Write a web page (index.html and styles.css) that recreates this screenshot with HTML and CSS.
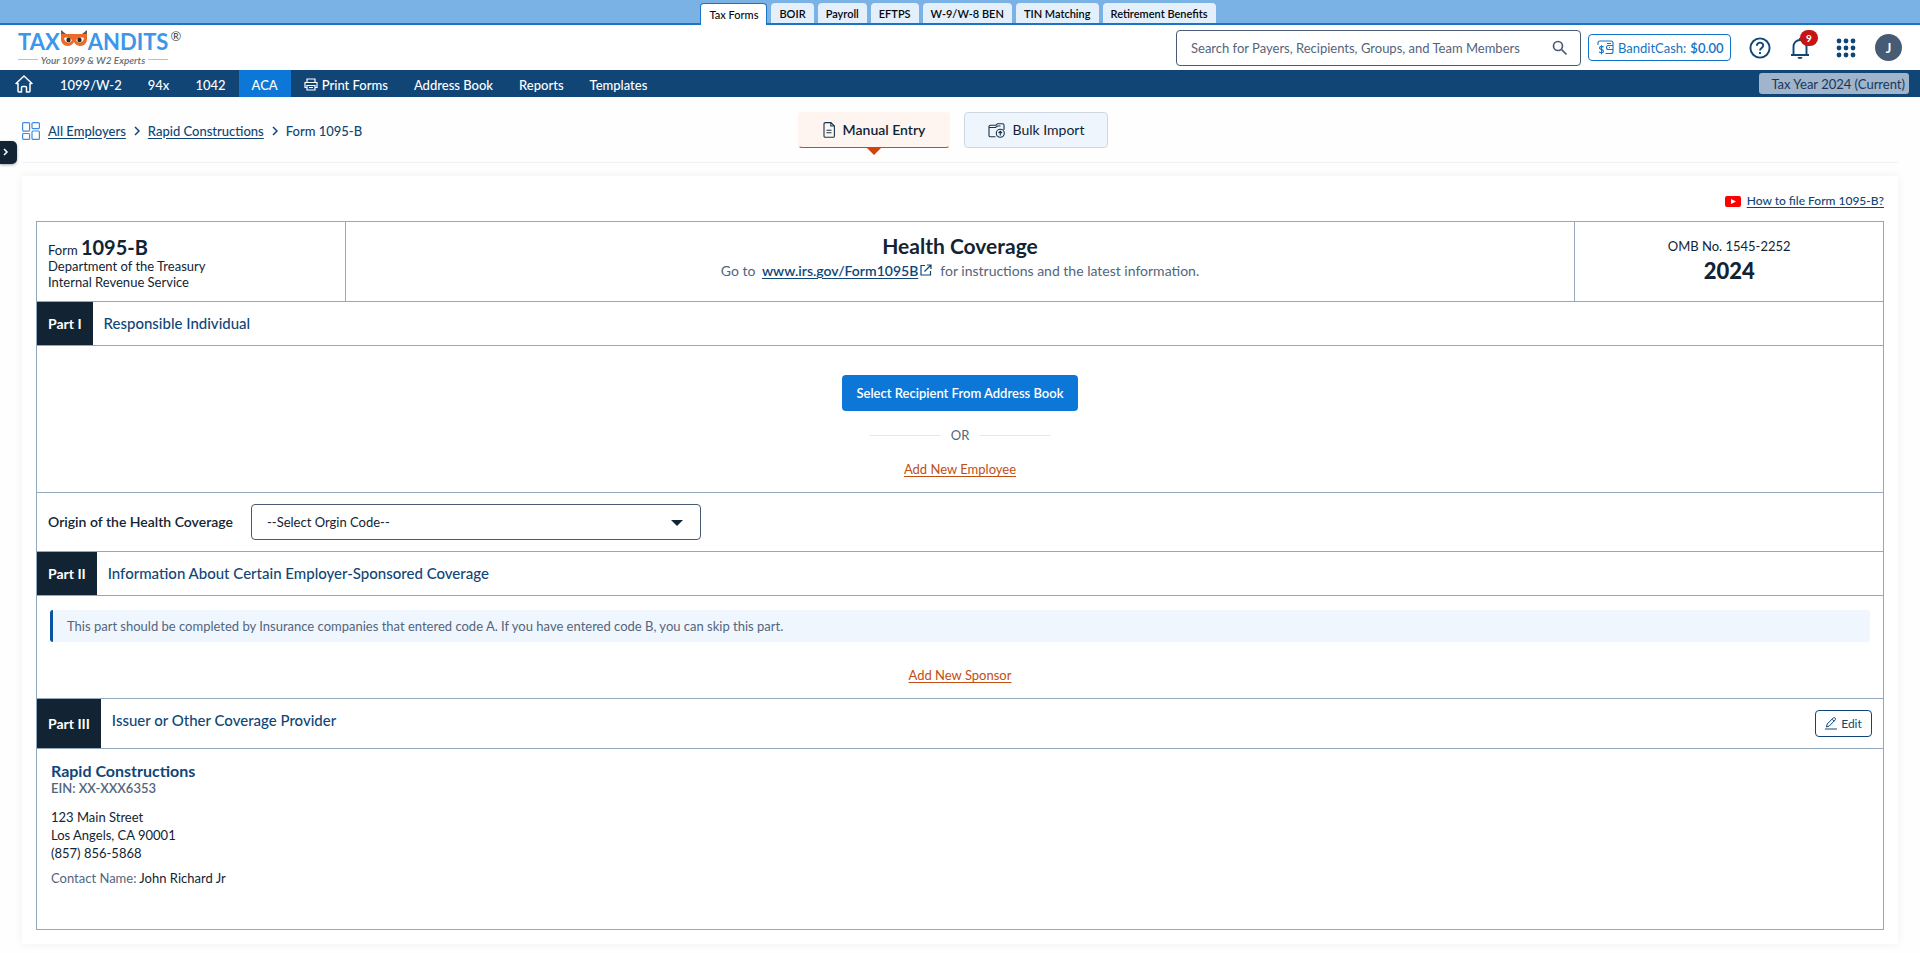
FILE: index.html
```html
<!DOCTYPE html>
<html lang="en">
<head>
<meta charset="utf-8">
<title>Form 1095-B</title>
<link rel="stylesheet" href="styles.css">
</head>
<body>
<nav class="product-tabs" aria-label="Products">
  <a class="product-tab active" href="#">Tax Forms</a>
  <a class="product-tab" href="#">BOIR</a>
  <a class="product-tab" href="#">Payroll</a>
  <a class="product-tab" href="#">EFTPS</a>
  <a class="product-tab" href="#">W-9/W-8 BEN</a>
  <a class="product-tab" href="#">TIN Matching</a>
  <a class="product-tab" href="#">Retirement Benefits</a>
</nav>

<header class="header">
  <a class="logo" href="#">
    <span class="logo-name">
      <span>TAX</span>
      <svg class="logo-mask" width="28" height="18" viewBox="0 0 28 18" aria-hidden="true">
        <path d="M1 5V0l5 4zM27 5V0l-5 4z" fill="#5c5c5e"/>
        <path d="M1 4h26v5c0 4-3 7-6.500 7-3 0-5-1.500-6.500-4-1.500 2.500-3.500 4-6.500 4C4 16 1 13 1 9z" fill="#ec6b26"/>
        <path d="M4 8c3-1 6 0 8 2-1 3-7 4-8-2zM24 8c-3-1-6 0-8 2 1 3 7 4 8-2z" fill="#fff"/>
        <circle cx="8.500" cy="10" r="2.200" fill="#26262b"/><circle cx="19.500" cy="10" r="2.200" fill="#26262b"/>
      </svg>
      <span>ANDITS</span><sup class="logo-reg">®</sup>
    </span>
    <span class="logo-tag">Your 1099 &amp; W2 Experts</span>
  </a>

  <div class="header-tools">
    <form class="search" role="search">
      <input class="search-input" type="text" aria-label="Search" placeholder="Search for Payers, Recipients, Groups, and Team Members">
      <button class="icon-button" type="button" aria-label="Search">
        <svg width="16" height="16" viewBox="0 0 16 16" fill="none" stroke="#475b75" stroke-width="1.700"><circle cx="6" cy="6" r="4.500"/><path d="M9.500 9.500l5 5"/></svg>
      </button>
    </form>
    <a class="cash" href="#">
      <svg width="17" height="15" viewBox="0 0 17 15" fill="none" stroke="#1473c8" stroke-width="1.100">
        <path d="M1 5V3c0-1.500.7-2 2-2h11c1.500 0 2 .7 2 2v8.500c0 1.500-.7 2-2 2H8.500"/><path d="M16 5.500h-4.500a2 2 0 0 0 0 4H16M10 3.500h4M12 7.500h1"/><path d="M6.500 7.200C6 6 2.500 6 2.500 8c0 2.200 4 1 4 3.200 0 2-3.700 2-4.300.6M4.500 5.300v8.900"/>
      </svg>
      <span>BanditCash:</span><strong class="cash-amount">$0.00</strong>
    </a>
    <button class="icon-button help" type="button" aria-label="Help">
      <svg width="22" height="22" viewBox="0 0 22 22" fill="none" stroke="#0f4677" stroke-width="1.900"><circle cx="11" cy="11" r="9.600"/><path d="M7.800 8.800c0-4.300 6.600-4 6.400-.2-.1 2.300-3.200 2.400-3.200 4.900"/><path d="M11 15v2"/></svg>
    </button>
    <button class="icon-button bell" type="button" aria-label="Notifications">
      <svg width="20" height="22" viewBox="0 0 20 22"><path d="M1 18h18M3.500 18V9.500a6.400 6.400 0 0 1 13 0V18M10 3V1" fill="none" stroke="#0f4677" stroke-width="1.900"/><path d="M7.500 20h5a2.500 2 0 0 1-5 0z" fill="#0f4677"/></svg>
      <span class="badge">9</span>
    </button>
    <button class="icon-button" type="button" aria-label="Apps">
      <svg width="20" height="20" viewBox="0 0 20 20" fill="#0f4677"><circle cx="3" cy="3" r="2.400"/><circle cx="10" cy="3" r="2.400"/><circle cx="17" cy="3" r="2.400"/><circle cx="3" cy="10" r="2.400"/><circle cx="10" cy="10" r="2.400"/><circle cx="17" cy="10" r="2.400"/><circle cx="3" cy="17" r="2.400"/><circle cx="10" cy="17" r="2.400"/><circle cx="17" cy="17" r="2.400"/></svg>
    </button>
    <button class="avatar" type="button">J</button>
  </div>
</header>

<nav class="main-nav" aria-label="Main">
  <a class="nav-home" href="#" aria-label="Home">
    <svg width="18" height="18" viewBox="0 0 18 18" fill="none" stroke="#fff" stroke-width="1.500" stroke-linejoin="round"><path d="M1 8.500L9 1l8 7.500h-2V16q0 1-1 1h-2.500v-4.500q0-1-1-1h-3q-1 0-1 1V17H4q-1 0-1-1V8.500z"/></svg>
  </a>
  <a class="nav-link" href="#">1099/W-2</a>
  <a class="nav-link" href="#">94x</a>
  <a class="nav-link" href="#">1042</a>
  <a class="nav-link current" href="#">ACA</a>
  <a class="nav-link" href="#">
    <svg width="14" height="13" viewBox="0 0 14 13" fill="none" stroke="#fff" stroke-width="1.200"><path d="M3 4V1h8v3M3 9.500H1V4.500h12v5h-2M3 7.500h8V12H3zM5 9.500h4"/></svg>
    Print Forms</a>
  <a class="nav-link" href="#">Address Book</a>
  <a class="nav-link" href="#">Reports</a>
  <a class="nav-link" href="#">Templates</a>
  <button class="tax-year" type="button">Tax Year 2024 (Current)</button>
</nav>

<button class="side-toggle" type="button" aria-label="Open side panel">
  <svg width="6" height="8" viewBox="0 0 6 8" fill="none" stroke="#fff" stroke-width="1.500"><path d="M1 1l3 3-3 3"/></svg>
</button>

<main class="page">
  <div class="toolbar">
    <nav class="breadcrumb" aria-label="Breadcrumb">
      <svg width="18" height="18" viewBox="0 0 18 18" fill="none" stroke="#3f8be0" stroke-width="1.200"><rect x=".6" y=".6" width="7" height="8.500" rx="1"/><rect x="10" y=".6" width="7.400" height="6" rx="1"/><rect x=".6" y="11.500" width="7" height="5.900" rx="1"/><rect x="10" y="9" width="7.400" height="8.400" rx="1"/></svg>
      <a class="link" href="#">All Employers</a>
      <svg width="6" height="10" viewBox="0 0 6 10" fill="none" stroke="#0f4677" stroke-width="1.500"><path d="M1 1l4 4-4 4"/></svg>
      <a class="link" href="#">Rapid Constructions</a>
      <svg width="6" height="10" viewBox="0 0 6 10" fill="none" stroke="#0f4677" stroke-width="1.500"><path d="M1 1l4 4-4 4"/></svg>
      <span>Form 1095-B</span>
    </nav>
    <div class="modes">
      <button class="mode selected" type="button">
        <svg width="12" height="16" viewBox="0 0 12 16" fill="none" stroke="#17344a" stroke-width="1.100"><path d="M1 2q0-1.400 1.400-1.400H8L11.400 4v9.900q0 1.400-1.400 1.400H2.400Q1 15.300 1 13.900zM7.800.6V4h3.600M3.500 8.300h5M3.500 10.700h5"/></svg>
        Manual Entry
      </button>
      <button class="mode" type="button">
        <svg width="17" height="15" viewBox="0 0 17 15" fill="none" stroke="#17344a" stroke-width="1.100"><path d="M7.500 13.800H2.400Q1 13.800 1 12.400V3.500Q1 2.200 2.400 2.200H8L9.500.7h5.200Q16 .7 16 2v5M1 4.500h6.500L9.500 3h3"/><circle cx="12.300" cy="10.300" r="4"/><path d="M12.300 12.600V8.300M10.600 10l1.700-1.700L14 10"/></svg>
        Bulk Import
      </button>
    </div>
  </div>

  <section class="card">
    <div class="help-row">
      <svg width="16" height="11" viewBox="0 0 16 11"><rect width="16" height="11" rx="2" fill="#f00"/><path d="M6 3l5 2.500L6 8z" fill="#fff"/></svg>
      <a class="link" href="#">How to file Form 1095-B?</a>
    </div>

    <div class="form">
      <div class="form-head">
        <div class="form-id">
          <div>Form <strong class="form-number">1095-B</strong></div>
          <div>Department of the Treasury</div>
          <div>Internal Revenue Service</div>
        </div>
        <div class="form-title">
          <h1 class="title">Health Coverage</h1>
          <p class="subtitle">Go to <a class="irs link" href="#">www.irs.gov/Form1095B</a><svg class="external" width="12" height="12" viewBox="0 0 12 12" fill="none" stroke="#0f4677" stroke-width="1.200"><path d="M5 1.500H1v9.500h9.500V7M7 1h4v4M11 1L4.500 7.500"/></svg>for instructions and the latest information.</p>
        </div>
        <div class="form-year">
          <div>OMB No. 1545-2252</div>
          <strong class="year">2024</strong>
        </div>
      </div>

      <div class="part">
        <span class="part-tag">Part I</span>
        <h2 class="part-title">Responsible Individual</h2>
      </div>
      <div class="recipient">
        <button class="primary" type="button">Select Recipient From Address Book</button>
        <div class="or">OR</div>
        <a class="add" href="#">Add New Employee</a>
      </div>

      <div class="origin">
        <label class="origin-label" for="origin">Origin of the Health Coverage</label>
        <div class="select-wrap">
          <select class="select" id="origin"><option>--Select Orgin Code--</option></select>
          <svg class="caret" width="12" height="6" viewBox="0 0 12 6" fill="#122433"><path d="M0 0h12L6 6z"/></svg>
        </div>
      </div>

      <div class="part">
        <span class="part-tag">Part II</span>
        <h2 class="part-title">Information About Certain Employer-Sponsored Coverage</h2>
      </div>
      <div class="sponsor">
        <p class="note">This part should be completed by Insurance companies that entered code A. If you have entered code B, you can skip this part.</p>
        <a class="add" href="#">Add New Sponsor</a>
      </div>

      <div class="part tall">
        <span class="part-tag">Part III</span>
        <h2 class="part-title">Issuer or Other Coverage Provider</h2>
        <button class="edit" type="button">
          <svg width="12" height="13" viewBox="0 0 12 13" fill="none" stroke="#0f4677" stroke-width="1"><path d="M1.500 10l.7-3L8.300.9q.9-.7 1.700 0t.3 1.900L4.300 9zM7 2.200l2 2M0 12h12"/></svg>
          Edit
        </button>
      </div>
      <div class="issuer">
        <h3 class="issuer-name">Rapid Constructions</h3>
        <div class="ein">EIN: XX-XXX6353</div>
        <address class="address">123 Main Street<br>Los Angels, CA 90001<br>(857) 856-5868</address>
        <div class="contact">Contact Name: <span class="contact-name">John Richard Jr</span></div>
      </div>
    </div>
  </section>
</main>
</body>
</html>
```
FILE: styles.css
```css
* { box-sizing: border-box; }
body {
  margin: 0;
  background: #fefefe;
  color: #122433;
  font: 13px/16px Lato, "Open Sans", sans-serif;
}
a { color: inherit; text-decoration: none; }
button, input, select { font: inherit; color: inherit; }
button { cursor: pointer; }
svg { flex: none; }
h1, h2, h3, p { margin: 0; }
.link { color: #0f4677; text-decoration: underline; text-underline-offset: 2px; }

.product-tabs {
  display: flex;
  justify-content: center;
  align-items: flex-end;
  gap: 4px;
  height: 25px;
  padding-right: 4px;
  background: #7ab2e5;
  border-bottom: 2px solid #1b74c4;
}
.product-tab {
  height: 20px;
  padding: 0 8px;
  background: #e4effc;
  border-radius: 4px 4px 0 0;
  color: #05090d;
  font-size: 11px;
  font-weight: 600;
  line-height: 21px;
}
.product-tab.active {
  margin-bottom: -2px;
  height: 22px;
  background: #fff;
  border: 1px solid #1b74c4;
  border-bottom: 0;
  font-weight: 500;
}

.header {
  display: flex;
  justify-content: space-between;
  align-items: center;
  height: 45px;
  padding: 0 18px;
  background: #fff;
}
.logo { display: flex; flex-direction: column; }
.logo-name {
  display: flex;
  align-items: center;
  height: 24px;
  color: #3c97ea;
  font-size: 22px;
  font-weight: 700;
}
.logo-mask { align-self: flex-start; }
.logo-reg { align-self: flex-start; margin-left: 2px; color: #4c4c4c; font-size: 13px; font-weight: 400; line-height: 12px; }
.logo-tag {
  display: flex;
  align-items: center;
  gap: 3px;
  width: 150px;
  color: #6c6c6e;
  font-size: 10px;
  font-style: italic;
  font-weight: 600;
  line-height: 12px;
  white-space: nowrap;
}
.logo-tag::before, .logo-tag::after { content: ""; flex: 1; height: 1px; background: #9fc9f2; }

.header-tools { display: flex; align-items: center; }
.search {
  display: flex;
  align-items: center;
  width: 405px;
  height: 36px;
  padding: 0 12px 0 14px;
  border: 1px solid #475b75;
  border-radius: 4px;
}
.search-input { flex: 1; min-width: 0; padding: 0; border: 0; outline: 0; background: none; font-size: 13px; }
.search-input::placeholder { color: #53657c; opacity: 1; }
.icon-button { display: flex; position: relative; padding: 0; border: 0; background: none; }
.cash {
  display: flex;
  align-items: center;
  gap: 4px;
  width: 143px;
  height: 27px;
  margin: 0 18px 0 7px;
  padding: 0 8px;
  border: 1px solid #1473c8;
  border-radius: 4px;
  color: #1473c8;
  white-space: nowrap;
}
.cash-amount { font-weight: 600; }
.help { margin-right: 19px; }
.bell { margin-right: 26px; }
.badge {
  position: absolute;
  top: -7px;
  right: -8px;
  width: 18px;
  height: 16px;
  border-radius: 8px;
  background: #c41414;
  color: #fff;
  font-size: 10px;
  font-weight: 700;
}
.avatar {
  width: 27px;
  height: 27px;
  margin-left: 19px;
  padding: 0;
  border: 0;
  border-radius: 50%;
  background: #475b75;
  color: #fff;
  font-weight: 700;
}

.main-nav {
  display: flex;
  align-items: center;
  height: 27px;
  padding: 0 11px 0 15px;
  background: #104576;
  color: #fff;
}
.nav-home { display: flex; margin-right: 14px; }
.nav-link { display: flex; align-items: center; gap: 4px; height: 27px; padding: 2px 13px 0; font-weight: 500; }
.nav-link.current { background: #0c77d6; }
.tax-year {
  height: 21px;
  margin-left: auto;
  padding: 0 4px 0 12px;
  border: 0;
  border-radius: 3px;
  background: #a0b4cb;
  color: #16385a;
}

.side-toggle {
  position: absolute;
  top: 141px;
  left: 0;
  display: flex;
  align-items: center;
  width: 17px;
  height: 23px;
  padding: 0 0 2px 3px;
  border: 0;
  border-radius: 0 5px 5px 0;
  background: #122433;
  box-shadow: 0 1px 3px #12243366;
}

.page { padding: 0 22px 9px; }
.toolbar {
  display: grid;
  grid-template-columns: 1fr auto 1fr;
  height: 66px;
  padding: 15px 14px 0 0;
  border-bottom: 1px solid #eef1f5;
}
.breadcrumb { display: flex; align-items: center; gap: 8px; height: 37px; color: #0f4677; font-size: 13px; font-weight: 500; white-space: nowrap; }
.modes { display: flex; gap: 14px; }
.mode {
  display: flex;
  position: relative;
  align-items: center;
  justify-content: center;
  gap: 8px;
  width: 144px;
  height: 36px;
  padding: 0;
  border: 1px solid #cfd8e2;
  border-radius: 4px;
  background: #eef5fd;
  font-size: 14px;
}
.mode.selected { width: 152px; background: #fef4f0; border-color: #fef4f0 #fef4f0 #cc4b14; font-weight: 600; }
.mode.selected::after {
  content: "";
  position: absolute;
  top: 35px;
  left: calc(50% - 7px);
  border: 7px solid transparent;
  border-top-color: #d04208;
  border-bottom: 0;
}

.card { margin-top: 13px; padding: 16px 14px 14px; background: #fff; box-shadow: 0 0 8px #12243310; }
.help-row { display: flex; justify-content: flex-end; align-items: center; gap: 6px; height: 18px; margin-bottom: 11px; font-size: 12px; font-weight: 500; }
.form { border: 1px solid #93a7bd; }
.form > * + * { border-top: 1px solid #93a7bd; }
.form-head { display: grid; grid-template-columns: 1fr 4fr 1fr; height: 79px; }
.form-id { padding: 14px 11px 0; }
.form-number { font-size: 20px; line-height: 22px; }
.form-title { padding: 13px 0 0; border: solid #93a7bd; border-width: 0 1px; text-align: center; }
.title { font-size: 21px; line-height: 22px; }
.subtitle { color: #53657c; font-size: 14px; line-height: 28px; }
.irs { margin-left: 3px; font-weight: 600; }
.external { margin: 0 8px 0 2px; }
.form-year { padding: 16px 0 0; text-align: center; }
.year { font-size: 22px; font-weight: 900; line-height: 34px; }

.part { display: flex; height: 44px; }
.part.tall { height: 50px; }
.part-tag { display: flex; align-items: center; padding: 0 11px; background: #122433; color: #fff; font-size: 14px; font-weight: 700; }
.part-title { flex: 1; padding: 13px 11px; color: #0f4677; font-size: 15px; font-weight: 500; }
.recipient { display: flex; flex-direction: column; align-items: center; padding: 29px 0 15px; }
.primary { width: 236px; height: 36px; padding: 0; border: 0; border-radius: 4px; background: #0c77d6; color: #fff; font-weight: 600; }
.or { display: flex; align-items: center; gap: 11px; width: 180px; margin: 16px 0 18px; color: #53657c; }
.or::before, .or::after { content: ""; flex: 1; height: 1px; background: #dfe8f3; }
.add { color: #c24e12; text-decoration: underline; text-underline-offset: 2px; }
.origin { display: flex; align-items: center; gap: 12px; height: 59px; padding-left: 11px; }
.origin-label { min-width: 191px; font-size: 14px; font-weight: 600; }
.select-wrap { position: relative; width: 450px; }
.select { appearance: none; width: 100%; height: 36px; padding: 0 15px; border: 1px solid #475b75; border-radius: 4px; background: #fff; }
.caret { position: absolute; right: 18px; top: 16px; pointer-events: none; }
.sponsor { display: flex; flex-direction: column; align-items: center; padding: 14px 13px 15px; }
.note { align-self: stretch; margin-bottom: 25px; padding: 8px 14px; border-left: 3px solid #0b53a5; border-radius: 3px; background: #f0f6fd; color: #53657c; }
.edit {
  display: flex;
  align-items: center;
  justify-content: center;
  gap: 4px;
  width: 57px;
  height: 27px;
  margin: 11px 11px 0 0;
  padding: 0;
  border: 1px solid #0f4677;
  border-radius: 4px;
  background: #fff;
  color: #0f4677;
  font-size: 12px;
}
.issuer { padding: 13px 14px 43px; }
.issuer-name { color: #0f4677; font-size: 16px; font-weight: 700; line-height: 18px; }
.ein { color: #53657c; font-weight: 600; }
.address { margin: 12px 0 8px; font-style: normal; line-height: 18px; }
.contact { color: #53657c; }
.contact-name { color: #122433; }
```
